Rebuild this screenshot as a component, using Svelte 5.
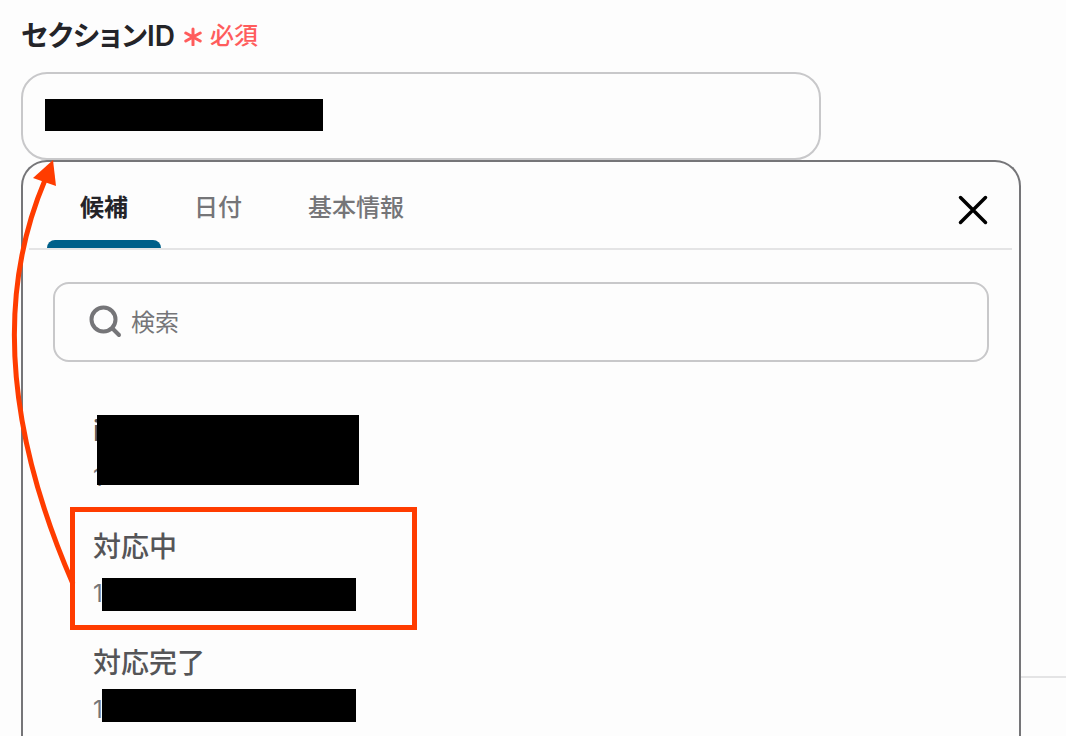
<script>
  let tabs = ["候補", "日付", "基本情報"];
  let activeTab = "候補";

  let sectionId = "";
  let query = "";

  // the ids are masked, only the first character is left
  let options = [
    { name: "i", id: "1", mask: "mask-both" },
    { name: "対応中", id: "1", mask: "mask-id", marked: true },
    { name: "対応完了", id: "1", mask: "mask-id-high" },
  ];
</script>

<main>
  <div class="label-row">
    <label for="section-id">セクションID</label>
    <span class="required">
      <svg width="18" height="20" viewBox="0 0 18 20" aria-hidden="true">
        <path d="M9 3V19M1.8 7L16.2 15M16.2 7L1.8 15" />
      </svg>
      必須
    </span>
  </div>

  <div class="field">
    <input id="section-id" type="text" bind:value={sectionId} />
    <span class="mask mask-field"></span>
  </div>

  <div class="columns">
    <section class="panel">
      <div class="panel-head">
        <div class="tabs" role="tablist">
          {#each tabs as tab}
            <button
              class="tab"
              class:active={tab === activeTab}
              role="tab"
              aria-selected={tab === activeTab}
              on:click={() => (activeTab = tab)}>{tab}</button
            >
          {/each}
        </div>
        <button class="close" aria-label="閉じる">
          <svg width="32" height="32" viewBox="0 0 32 32">
            <path d="M3.5 3.5L28.5 28.5M28.5 3.5L3.5 28.5" />
          </svg>
        </button>
      </div>

      <label class="search">
        <svg width="34" height="34" viewBox="0 0 34 34" aria-hidden="true">
          <circle cx="14.5" cy="14.5" r="12" />
          <path d="M23.5 23.5L30 30" />
        </svg>
        <input
          type="text"
          placeholder="検索"
          aria-label="検索"
          bind:value={query}
        />
      </label>

      <ul>
        {#each options as option}
          <li class:marked={option.marked}>
            <button class="option" on:click={() => (sectionId = option.id)}>
              <span class="name">{option.name}</span>
              <span class="id">{option.id}</span>
            </button>
            <span class="mask {option.mask}"></span>
          </li>
        {/each}
      </ul>
    </section>
    <div class="gutter"><hr /></div>
  </div>

  <svg class="arrow" width="90" height="600" viewBox="0 0 90 600" aria-hidden="true">
    <path class="line" d="M45 180Q-28 352 73 584" />
    <path class="head" d="M53 160L33 178L56 186Z" />
  </svg>
</main>

<style>
  :global(body) {
    margin: 0;
    background: #fdfdfd;
  }

  main {
    --border: #c8c8ca;
    --gray: #757578;
    --mark: #ff3c00;
    position: relative;
    display: flex;
    flex-direction: column;
    box-sizing: border-box;
    min-height: 100vh;
    padding: 16px 0 0 21px;
    font-family: Inter, "Noto Sans CJK JP", sans-serif;
  }

  button,
  input {
    font-family: inherit;
    background: none;
    border: 0;
    padding: 0;
    outline: none;
  }

  button {
    cursor: pointer;
  }

  .label-row {
    display: flex;
    align-items: center;
    gap: 9px;
    height: 40px;
    margin-bottom: 16px;
  }

  .label-row label {
    color: #242428;
    font-size: 28px;
    font-weight: 600;
    line-height: 40px;
    font-feature-settings: "palt";
  }

  .required {
    display: flex;
    align-items: center;
    gap: 8px;
    color: #ff5c5c;
    font-size: 24px;
    font-weight: 500;
    line-height: 40px;
  }

  .required svg {
    stroke: #ff5c5c;
    stroke-width: 3;
    stroke-linecap: round;
  }

  .field {
    position: relative;
    width: calc((100% - 45px) * 0.8);
  }

  .field input {
    display: block;
    box-sizing: border-box;
    width: 100%;
    height: 88px;
    padding: 0 24px;
    border: 2px solid var(--border);
    border-radius: 26px;
    font-size: 24px;
  }

  .mask {
    position: absolute;
    background: #000;
  }

  .mask-field {
    left: 24px;
    top: 27px;
    width: 278px;
    height: 32px;
  }

  .columns {
    flex: 1;
    display: grid;
    grid-template-columns: 1fr 45px;
  }

  .panel {
    border: 2px solid var(--gray);
    border-bottom: 0;
    border-radius: 26px 26px 0 0;
  }

  .panel-head {
    display: flex;
    justify-content: space-between;
    height: 86px;
    margin: 0 7px 0 6px;
    padding: 0 23px 0 18px;
    border-bottom: 2px solid #e4e4e5;
  }

  .tabs {
    display: flex;
  }

  .tab {
    position: relative;
    padding: 0 33px;
    color: var(--gray);
    font-size: 24px;
    font-weight: 500;
  }

  .tab.active {
    color: #242428;
    font-weight: 700;
  }

  .tab.active::after {
    content: "";
    position: absolute;
    left: 0;
    right: 0;
    bottom: 0;
    height: 8px;
    border-radius: 8px 8px 0 0;
    background: #00608a;
  }

  .close {
    display: flex;
    align-items: center;
    padding-top: 10px;
  }

  .close svg {
    fill: none;
    stroke: #000;
    stroke-width: 3.5;
    stroke-linecap: round;
  }

  .search {
    display: flex;
    align-items: center;
    gap: 8px;
    box-sizing: border-box;
    height: 80px;
    margin: 32px 30px 0;
    padding: 0 34px;
    border: 2px solid var(--border);
    border-radius: 16px;
  }

  .search svg {
    fill: none;
    stroke: var(--gray);
    stroke-width: 4;
    stroke-linecap: round;
  }

  .search input {
    flex: 1;
    height: 40px;
    font-size: 24px;
  }

  .search input::placeholder {
    color: var(--gray);
    opacity: 1;
  }

  ul {
    display: flex;
    flex-direction: column;
    gap: 11px;
    margin: 27px 0 0;
    padding: 0;
    list-style: none;
  }

  li {
    position: relative;
  }

  .option {
    display: flex;
    flex-direction: column;
    gap: 13px;
    width: 100%;
    padding: 24px 70px 0;
    text-align: left;
  }

  .name {
    color: #555558;
    font-size: 28px;
    font-weight: 500;
    line-height: 36px;
  }

  .id {
    color: var(--gray);
    font-size: 24px;
    line-height: 32px;
  }

  .mask-both {
    left: 74px;
    top: 26px;
    width: 262px;
    height: 70px;
  }

  .mask-id,
  .mask-id-high {
    left: 79px;
    top: 73px;
    width: 254px;
    height: 33px;
  }

  .mask-id-high {
    top: 68px;
  }

  /* red frame round the option to pick */
  .marked::after {
    content: "";
    position: absolute;
    left: 47px;
    top: 2px;
    box-sizing: border-box;
    width: 347px;
    height: 123px;
    border: 5px solid var(--mark);
    pointer-events: none;
  }

  .gutter hr {
    height: 2px;
    margin: 516px 0 0;
    border: 0;
    background: #e4e4e5;
  }

  .arrow {
    position: absolute;
    left: 0;
    top: 0;
    pointer-events: none;
  }

  .line {
    fill: none;
    stroke: var(--mark);
    stroke-width: 5;
  }

  .head {
    fill: var(--mark);
  }
</style>
